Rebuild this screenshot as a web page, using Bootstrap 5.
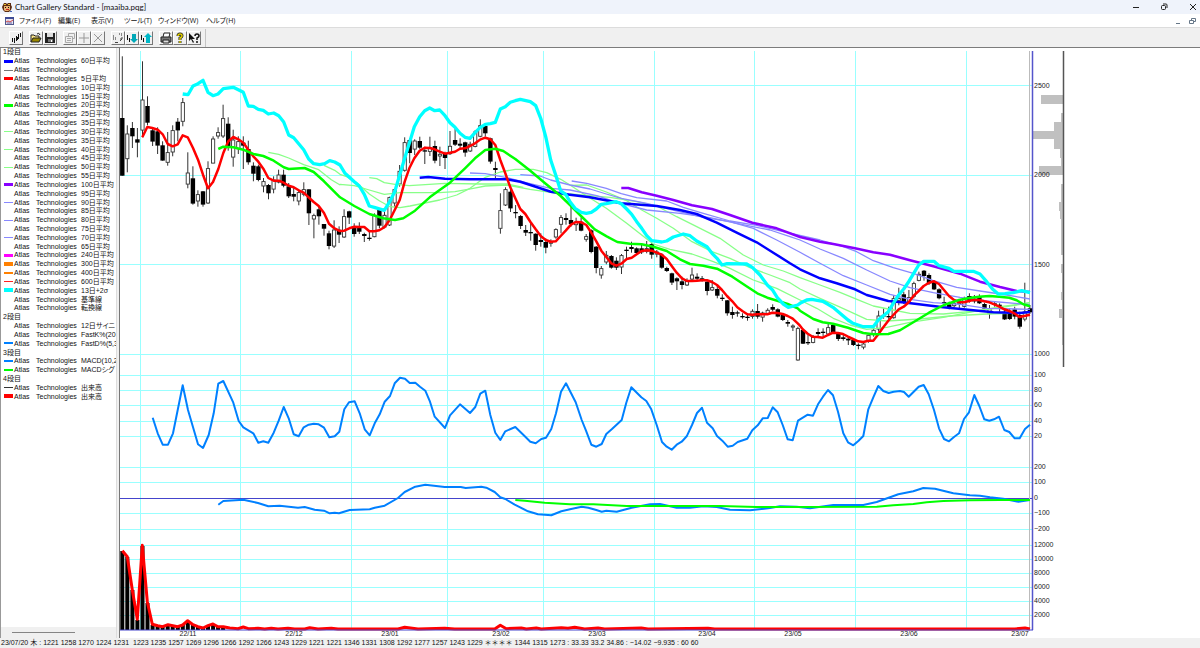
<!DOCTYPE html>
<html lang="ja">
<head>
<meta charset="utf-8">
<meta name="viewport" content="width=device-width, initial-scale=1">
<title>Chart Gallery Standard - [maaiba.pqg]</title>
<link href="https://cdn.jsdelivr.net/npm/bootstrap@5.3.0/dist/css/bootstrap.min.css" rel="stylesheet">
<style>
  body { font-family: "Liberation Sans", "Noto Sans CJK JP", sans-serif; font-size: 7px; line-height: 10px; color: #111; background: #fff; overflow-x: hidden; }
  button { border: 0; padding: 0; background: none; color: inherit; font: inherit; line-height: inherit; }
  svg { display: block; }
  .title-bar { height: 14px; background: #eff3fb; }
  .title-bar h1 { font: 8px/14px Lato, sans-serif; color: #111; }
  .app-icon { margin: 0 3px 0 2px; }
  .doc-icon { margin: 0 5px; }
  .win-controls { gap: 20px; padding-right: 3px; }
  .menu-bar { height: 13px; font: 7px/13px "Open Sans", "Noto Sans CJK JP", sans-serif; }
  .menu-items { display: grid; grid-template-columns: 39px 33px 33px 34px 48px 40px; font-feature-settings: "palt"; }
  .menu-items button { text-align: left; white-space: nowrap; }
  .tool-bar { height: 21px; background: #f0f0f0; border-top: 1px solid #dcdcdc; border-bottom: 1px solid #7c7c7c; padding-left: 9px; gap: 6px; }
  .tool { width: 14px; height: 14px; background: #f0f0f0; border-right: 1px solid #777; border-bottom: 1px solid #777; border-left: 1px solid #fff; border-top: 1px solid #fff; display: flex; align-items: center; justify-content: center; }
  .tool-end { width: 1px; height: 18px; background: #c4c4c4; margin-left: -2px; }
  .side { width: 117px; border-right: 1px solid #ddd; border-left: 1px solid #999; overflow: hidden; }
  .legend { height: 353px; font-feature-settings: "palt"; }
  .legend li { display: flex; align-items: center; flex: 1 1 0; min-height: 0; white-space: nowrap; }
  .legend .head { padding-left: 2px; }
  .swatch { width: 11px; margin: 0 0 0 2px; flex: none; }
  .c1 { width: 22px; flex: none; }
  .c2 { width: 45px; flex: none; }
  .h-scroll { height: 11px; background: #f0f0f0; padding: 5px 41px 0 11px; }
  .h-scroll div { height: 1px; background: #858585; }
  .splitter { width: 3px; background: #f0f0f0; border-right: 1px solid #777; }
  .chart { min-width: 0; }
  .chart svg { width: 100%; height: auto; }
  .chart text { font-size: 7px; fill: #222; }
  .status { height: 10px; background: #f0f0f0; gap: 2px; padding-left: 1px; white-space: nowrap; }
</style>
</head>
<body>
<div class="d-flex flex-column min-vh-100">
  <header>
    <div class="title-bar d-flex align-items-center">
      <svg class="app-icon" width="10" height="11" viewBox="0 0 10 11"><path d="M1 3 2 1h2l1 1 1-1h3v2l1 2-1 3-2 2H3L1 8 0 5z" fill="#5b2c12"/><path d="M2 4h6v4L6 9H3L2 8z" fill="#e8b070"/><path d="M2 2h2v1H2zM6 2h2v1H6z" fill="#e5bd35"/><path d="M3 5h1v1H3zM6 5h1v1H6z" fill="#111"/><path d="M4 7h3v1H4z" fill="#c22"/><path d="M8 9h2v1H8z" fill="#46b"/></svg>
      <h1 class="m-0">Chart Gallery Standard - [maaiba.pqg]</h1>
      <div class="win-controls d-flex align-items-center ms-auto">
        <button aria-label="Minimize"><svg width="8" height="8" viewBox="0 0 8 8"><path d="M1 4.5h6" stroke="#222"/></svg></button>
        <button aria-label="Restore"><svg width="8" height="8" viewBox="0 0 8 8" fill="none" stroke="#222"><rect x="1.5" y="2.5" width="4" height="4" rx="1"/><path d="M3 1h3q1 0 1 1v3"/></svg></button>
        <button aria-label="Close"><svg width="9" height="8" viewBox="0 0 9 8"><path d="m2 1 6 6m0-6L2 7" stroke="#222"/></svg></button>
      </div>
    </div>
    <nav class="menu-bar d-flex align-items-center">
      <svg class="doc-icon flex-shrink-0" width="9" height="8" viewBox="0 0 9 8"><rect x=".5" y=".5" width="8" height="7" fill="#e8e4f0" stroke="#535a8e"/><path d="M0 1h9" stroke="#3d4b96" stroke-width="2"/><path d="m1 5 2-1 2 1 3-2" fill="none" stroke="#c44"/><path d="M2 6h5" stroke="#66a"/></svg>
      <div class="menu-items">
        <button>ファイル(F)</button><button>編集(E)</button><button>表示(V)</button><button>ツール(T)</button><button>ウィンドウ(W)</button><button>ヘルプ(H)</button>
      </div>
      <div class="d-flex gap-2 ms-auto pe-1">
        <button aria-label="Minimize chart"><svg width="6" height="8" viewBox="0 0 6 8"><path d="M1 6.5h4" stroke="#678"/></svg></button>
        <button aria-label="Restore chart"><svg width="7" height="8" viewBox="0 0 7 8" fill="#fff" stroke="#678"><path d="M2.5 1.5h4v3h-4z"/><path d="M.5 3.5h4v3h-4z"/></svg></button>
      </div>
    </nav>
    <div class="tool-bar d-flex align-items-center" id="tools"></div>
  </header>
  <main class="d-flex flex-grow-1">
    <aside class="side d-flex flex-column flex-shrink-0">
      <ul class="legend list-unstyled d-flex flex-column m-0" id="legend"></ul>
      <div class="h-scroll mt-auto"><div></div></div>
    </aside>
    <div class="splitter flex-shrink-0"></div>
    <section class="chart flex-grow-1"><svg id="chart" viewBox="120 48 1080 590" role="img" aria-label="Stock chart"></svg></section>
  </main>
  <footer class="status d-flex align-items-center" id="status"></footer>
</div>
<script src="https://cdn.jsdelivr.net/npm/bootstrap@5.3.0/dist/js/bootstrap.bundle.min.js"></script>
<script>
// Toolbar buttons, in groups
const icons = {
  'Chart': '<path d="M2.500 6v4M4.500 8v3M4.500 8V6M6.500 4v5M8.500 2v5M10.500 1v4" stroke="#111"/><path d="M2 8h1v2H2zM6 5h2v3H6z" fill="#111"/>',
  'Open': '<path d="M1 10V3h3l1 1h4v2" fill="#ffe98c" stroke="#222"/><path d="m1 10 2-4h8L9 10z" fill="#998700" stroke="#222"/><path d="M7 2q2-2 3 1" fill="none" stroke="#222"/>',
  'Save': '<path d="M1 1h10v10H1z" fill="#222"/><path d="M3 1h6v4H3z" fill="#ddd"/><path d="M4 7h5v3H4z" fill="#777"/><path d="M7 8h1v2H7z" fill="#fff"/>',
  'Properties': '<path d="M1.500 4.500h7v6h-7zM4.500 4V1.500h6v5H9M3 6.500h4M3 8.500h4" fill="none" stroke="#aaa"/>',
  'Add': '<path d="M6 1v10M1 6h10" stroke="#999"/>',
  'Delete': '<path d="m2 2 8 8m0-8-8 8" stroke="#999"/>',
  'Refresh': '<path d="M1.500 3v5M3.500 5v3M7.500 1v2M9.500 1v3" stroke="#888"/><path d="M3 10.500h3M8 9l2-2M10 5v2H8" fill="none" stroke="#444"/>',
  'Down': '<path d="M1.500 3v5M3.500 6v4" stroke="#111"/><path d="M6 2h4v5h2l-4 4-4-4h2z" fill="#00a8b8"/>',
  'Up': '<path d="M1.500 3v5M3.500 6v4" stroke="#111"/><path d="M6 11h4V5h2L8 1 4 5h2z" fill="#00b8c8"/>',
  'Print': '<path d="m3 5 1-4h6L9 5" fill="#fff" stroke="#222"/><path d="M1 5h10v5H1z" fill="#777" stroke="#222"/><path d="M3 8h6v3H3z" fill="#ddd" stroke="#222"/>',
  'Help': '<path d="M4 4q0-2 2-2t2 2q0 1-2 2v2M6 9v2" fill="none" stroke="#222" stroke-width="3"/><path d="M4 4q0-2 2-2t2 2q0 1-2 2v2M6 9v2" fill="none" stroke="#e0cf00" stroke-width="1.5"/>',
  'Context help': '<path d="M1 1v8l2-2 2 4 1-1-2-3h3z" fill="#111"/><path d="M7 4q0-2 2-2t2 2q0 1-2 2v2M9 9v2" fill="none" stroke="#111" stroke-width="1.5"/>'
};
document.getElementById('tools').innerHTML =
  [['Chart'],['Open','Save'],['Properties','Add','Delete'],['Refresh','Down','Up'],['Print','Help','Context help']]
  .map(g => '<div class="d-flex">' + g.map(n => `<button class="tool" aria-label="${n}"><svg width="12" height="12" viewBox="0 0 12 12">${icons[n]}</svg></button>`).join('') + '</div>').join('') + '<div class="tool-end"></div>';

// Legend rows: a plain string is a heading, otherwise [label, colour, line width]
const rows = ['1段目',['60日平均','#00f',3],['','#777',1],['5日平均','#f00',3],['10日平均'],['15日平均'],['20日平均','#0f0',3],['25日平均'],['35日平均'],['30日平均','#8f8',1],['35日平均'],['40日平均','#8f8',1],['45日平均'],['50日平均','#8f8',1],['55日平均'],['100日平均','#80f',3],['95日平均'],['90日平均','#88f',1],['85日平均'],['80日平均','#88f',1],['75日平均'],['70日平均','#88f',1],['65日平均'],['240日平均','#f0f',3],['300日平均','#ff8000',4],['400日平均','#ff8000',2],['600日平均','#f22',1],['13日+2σ','#0ff',4],['基準線'],['転換線'],'2段目',['12日サイニ'],['FastK%(20'],['FastD%(5,3','#0080ff',2],'3段目',['MACD(10,2','#0080ff',2],['MACDシグ','#0f0',2],'4段目',['出来高','#333',1],['出来高','#f00',4]];
document.getElementById('legend').innerHTML = rows.map(r => typeof r === 'string' ? `<li class="head">${r}</li>` :
  `<li><span class="swatch">${r[1] ? `<svg width="11" height="5" viewBox="0 0 11 5"><path d="M1 ${r[2] % 2 ? 2.5 : 2}h9" stroke="${r[1]}" stroke-width="${r[2]}"/></svg>` : ''}</span><span class="c1">Atlas</span><span class="c2">Technologies</span><span>${r[0]}</span></li>`).join('');

document.getElementById('status').innerHTML = '23/07/20|木 :|1221|1258|1270|1224|1231||1223|1235|1257|1269|1296|1266|1292|1266|1243|1229|1221|1221|1346|1331|1308|1292|1277|1257|1243|1229|＊＊＊＊|1344|1315|1273 :|33.33|33.2|34.86 :|−14.02|−9.935 :|60|60'
  .split('|').map(t => `<span>${t}</span>`).join('');

// Candles: blocks of [high, body top, body bottom, low, filled] in thirds of a unit below "base"
const blocks = [
 {from:0, base:48, d:[[25,210,383,383,1],[232,257,333,373,0],[222,240,265,300,1],[240,274,284,328,1],[40,155,247,268,0],[145,174,224,232,1],[238,247,281,294,1],[238,250,293,318,1],[280,292,338,338,1],[252,313,344,353,0],[232,247,313,325,0],[210,221,247,280,1],[150,163,221,235,0],[313,374,409,421,0],[355,391,467,470,1],[427,439,460,476,0],[429,430,470,476,1],[340,361,466,468,0],[265,272,346,346,0],[238,253,265,272,0],[170,211,265,270,0],[208,227,300,308,1],[245,275,328,356,0],[265,280,303,318,0],[265,284,293,363,1],[278,303,343,350,1],[343,353,377,400,1],[350,355,396,400,1],[390,400,415,433,0],[408,411,436,454,1],[385,395,424,436,0],[365,380,403,406,0],[365,380,413,418,1],[405,415,445,450,1],[420,438,446,460,1],[425,433,460,472,0],[403,424,440,445,0],[424,424,496,531,1],[497,502,514,571,0],[475,484,505,530,1],[528,528,542,563,1],[548,556,594,604,1],[517,545,595,600,0],[535,545,560,585,1]]},
 {from:44, base:80, d:[[388,409,472,474,0],[392,394,413,432,1],[430,440,462,470,1],[427,440,455,462,1],[458,462,468,486,1],[450,473,477,482,1],[400,405,471,472,0],[384,387,437,445,1],[395,405,442,445,0],[350,352,436,438,0],[325,328,370,380,0],[255,273,313,320,0],[172,187,272,275,0],[175,180,219,250,1],[178,182,208,225,0],[170,183,203,208,1],[200,211,215,252,1],[170,203,215,228,0],[182,198,242,250,1],[200,222,229,258,0],[215,222,234,267,1],[153,198,222,225,0],[145,180,194,198,1],[175,191,197,205,1],[185,187,218,230,1],[185,192,214,216,0],[150,155,200,202,0],[118,136,170,172,0],[130,138,160,170,1],[173,175,245,251,1],[245,264,270,297,1],[340,391,446,461,0],[322,328,376,378,0],[320,335,385,396,1],[375,396,400,415,1],[405,408,438,447,1],[435,450,458,468,1],[428,456,460,482,1],[460,461,495,512,1],[460,480,486,500,1],[475,486,503,520,1],[478,484,491,500,0],[445,448,472,476,0],[405,412,434,460,0],[400,414,420,434,1]]},
 {from:89, base:170, d:[[110,150,162,170,1],[143,155,165,183,0],[142,155,182,184,1],[192,199,209,215,0],[178,181,246,250,1],[228,230,294,310,1],[288,295,316,326,0],[243,255,277,283,0],[255,258,293,296,1],[262,272,293,300,1],[252,256,292,312,0],[230,239,243,265,1],[215,231,237,248,1],[232,235,249,255,1],[225,235,247,252,1],[213,235,245,250,0],[218,222,254,266,1],[240,245,253,262,0],[250,254,293,296,1],[290,294,303,306,1],[308,310,338,345,1],[322,325,334,360,1],[320,334,345,358,1],[325,333,346,348,0],[293,314,328,332,0],[310,320,326,332,1],[318,325,330,335,1],[330,335,363,376,1],[330,352,361,363,0],[348,357,377,385,1],[373,383,386,393,1],[390,391,430,437,1],[410,426,435,446,1],[422,427,431,440,1],[430,438,440,446,1],[430,440,444,452,1],[418,423,440,446,0],[402,423,440,446,1],[425,428,442,455,0],[415,420,432,435,0],[403,411,419,424,1],[415,418,440,442,1],[430,434,450,453,1],[450,456,461,470,1],[463,467,472,483,0],[470,475,571,572,0]]},
 {from:135, base:240, d:[[270,270,311,312,1],[285,306,310,315,1],[285,291,308,310,0],[265,276,282,292,1],[265,275,279,290,1],[252,262,283,285,0],[250,255,276,280,1],[278,281,297,303,1],[282,292,297,302,1],[290,296,301,315,1],[298,300,315,318,1],[310,314,318,328,1],[308,311,322,328,0],[285,285,304,308,0],[262,270,283,290,0],[212,227,268,275,0],[205,225,230,236,0],[200,228,232,238,1],[165,175,234,236,0],[143,175,182,196,0],[155,163,187,192,1],[150,172,185,190,0],[125,130,170,175,0],[95,102,122,124,0],[90,92,108,122,1],[100,105,130,135,1],[120,125,148,150,1],[145,148,175,178,1],[170,186,190,198,1],[185,193,202,208,1],[180,190,198,202,0],[180,185,192,208,0],[170,176,200,203,0],[160,168,180,188,1],[165,176,184,190,1],[163,168,190,192,1],[188,192,206,215,1],[195,205,222,236,0],[185,190,195,200,1],[190,194,200,215,1],[205,215,238,240,1],[205,215,237,240,1],[200,208,230,238,1],[215,225,260,266,1],[128,215,238,244,0],[195,205,217,222,1]]}
];
// Origins of the chart regions that the line points are counted from
const O = {A:[118,48],B:[340,80],C:[570,170],D:[800,240],E:[118,370],F:[570,370],G:[118,530]};
// Lines: colour, width, then one list of points (in thirds) for each region crossed
const lines = [
 ['#8f8',1.3,{A:'451,313 482,319 512,330 557,350 602,365 640,395 665,410',B:'0,313 43,317 88,330 133,343 180,338 299,338 345,335 400,325 436,318 500,315 570,328 632,337 680,346'}],
 ['#8f8',1.3,{A:'618,352 650,367',B:'0,283 20,290 50,308 88,342 118,362 150,380 180,383 210,378 299,360 350,345 390,325 436,292 481,276 526,268 580,268 620,278 662,298',C:'0,45 50,78 109,115 170,160 215,195 250,222 300,238 366,252 430,275 480,295 550,330 620,355',D:'0,180 50,205 100,235 150,255 200,268 260,262 330,247 430,232 520,215 600,200 690,188'}],
 ['#8f8',1.3,{B:'88,293 110,296 133,308 165,313 208,317 315,310 420,312 500,312 550,322'}],
 ['#8f8',1.3,{C:'0,46 50,45 109,66 170,92 215,120 260,145 310,175 366,215 426,245 480,265 540,293 600,315 660,338',D:'0,147 60,175 110,197 150,215 200,238 260,243 360,237 450,228 560,222 690,218'}],
 ['#8f8',1.3,{C:'0,72 120,82 200,95 260,108 320,140 380,170 450,205 520,255 580,285 640,303',D:'0,113 60,135 120,157 180,182 220,198 280,210 330,220 430,222 540,212 620,200 690,188'}],
 ['#88f',1.3,{B:'541,284 600,288 632,300',C:'0,45 60,57 109,72 154,85 230,100 300,118 400,142 480,155 550,175 620,210',D:'0,37 60,70 130,107 200,135 270,163 330,178 400,188 480,193 560,205 690,208'}],
 ['#88f',1.3,{B:'390,279 436,281 500,293 570,311 632,325',C:'0,60 80,77 150,100 230,120 330,130 420,143 500,160 600,180 660,200',D:'0,0 60,27 130,55 200,90 270,123 330,143 400,158 480,172 560,183 690,194'}],
 ['#88f',1.3,{C:'5,33 50,40 109,55 154,71 200,83 290,93 340,112 400,130 480,153 560,166 640,185',D:'60,0 130,20 170,35 220,62 280,83 340,100 400,122 470,142 540,153 620,165 690,177'}],
 ['#00f',2.5,{B:'239,293 265,291 315,296 390,298 500,298 541,305 587,320 632,335 662,340',C:'0,74 60,82 154,100 260,108 330,120 380,132 440,158 500,188 560,217 610,248 660,280',D:'0,88 60,115 110,130 165,148 200,165 265,183 320,188 430,202 520,211 580,217 660,219 690,216'}],
 ['#80f',2.5,{C:'154,54 175,54 215,67 260,77 310,90 366,106 426,117 480,135 547,158 620,175',D:'0,-9 60,5 100,12 165,25 220,37 270,44 330,61 400,79 480,101 540,125 600,141 650,153 690,156'}],
 ['#f00',2.5,{A:'73,268 88,237 103,240 119,245 134,259 149,288 164,295 179,289 194,262 209,268 225,300 240,335 255,380 270,421 285,402 301,363 316,315 331,280 346,267 361,274 376,284 391,305 406,325 421,341 436,362 451,390 467,398 482,398 497,404 512,413 527,418 542,427 557,434 572,448 587,462 602,474 618,495 633,527 648,540 663,548',B:'0,453 13,452 28,445 43,440 58,441 73,441 88,454 103,454 118,451 133,442 149,420 164,390 179,360 194,305 208,265 223,235 239,212 254,203 269,204 284,208 299,215 315,221 330,218 345,215 360,206 375,205 390,198 405,190 420,179 436,173 451,178 466,195 481,240 496,280 511,322 526,355 541,387 556,402 571,425 587,448 602,468 617,480 632,485 647,484 662,468 677,452',C:'3,164 18,156 34,157 49,165 64,188 79,214 94,242 109,261 124,280 139,287 154,281 170,267 185,263 200,253 215,243 230,241 245,242 260,248 275,254 290,267 305,288 320,308 336,325 351,333 366,333 381,332 396,331 411,331 426,336 441,345 456,360 471,378 487,394 502,412 517,423 532,433 547,434 562,433 577,433 592,433 607,428 622,429 638,432 653,438 668,446 683,460',D:'0,257 8,268 23,281 38,290 53,291 68,293 84,285 99,278 114,279 129,282 144,290 159,297 174,304 190,306 205,302 220,302 235,283 250,262 265,242 280,225 296,208 311,200 326,187 341,167 356,153 371,138 387,128 402,124 417,132 432,150 447,168 462,180 477,186 492,187 507,183 522,179 537,180 553,184 568,187 583,193 598,200 613,208 628,213 643,220 658,231 673,228 690,224'}],
 ['#0f0',2.5,{A:'301,303 316,296 346,298 376,305 406,318 436,324 467,338 497,358 512,363 560,360 587,372 618,400 648,430',B:'0,352 43,378 88,402 130,415 165,420 190,415 225,392 269,352 299,330 330,308 375,265 405,235 436,210 466,206 490,213 526,237 571,272 617,311 662,348',C:'0,105 30,135 74,178 110,199 142,216 180,221 215,223 250,230 290,243 330,268 360,282 400,287 441,296 487,320 532,350 562,370 592,383 622,392 653,402 683,415',D:'0,212 40,237 68,247 99,251 144,263 190,279 220,283 265,282 300,271 341,246 387,218 432,195 477,180 507,174 537,170 568,168 598,170 628,173 650,181 670,193 690,199'}],
 ['#0ff',3.3,{A:'194,138 210,140 225,114 240,107 255,97 270,133 285,143 300,138 316,122 346,118 376,133 391,174 406,175 421,184 436,187 451,198 467,195 482,203 497,222 512,261 527,269 557,305 572,333 587,347 605,350 620,347 635,338 650,342',B:'0,255 15,280 43,305 58,318 73,343 88,378 103,382 133,391 149,365 164,335 179,285 194,235 208,190 223,140 239,110 254,92 269,84 284,92 299,90 315,107 330,128 345,142 360,160 375,172 390,175 405,158 420,143 436,133 451,131 466,127 481,87 496,80 511,67 526,62 541,58 571,65 587,77 602,115 617,170 632,240 647,285 662,333 677,343',C:'0,95 15,115 34,127 49,130 64,127 79,117 94,103 109,101 139,95 154,101 170,117 185,133 200,155 215,175 230,197 245,212 275,216 290,213 310,201 340,192 360,197 380,213 411,230 426,250 441,265 456,285 471,281 530,282 547,292 570,315 592,345 607,359 622,383 640,402 655,412 683,405',D:'0,190 20,180 35,178 68,184 84,193 99,202 120,220 144,240 159,250 190,260 220,260 235,240 265,215 280,190 296,165 311,147 326,125 341,100 356,75 371,64 402,64 417,77 447,85 462,94 520,94 540,102 560,125 578,148 595,162 615,161 640,158 665,152 690,158'}],
 ['#0080ff',2,{E:'104,143 119,190 134,224 150,224 165,190 194,46 210,120 240,223 255,234 272,195 287,130 301,41 316,33 346,98 362,153 376,172 406,190 421,218 436,214 451,218 467,188 482,152 497,111 512,145 527,193 542,199 557,172 572,164 587,161 602,163 618,173 634,202 650,199 664,185 679,118 693,97 710,94 725,130 740,178 755,196 770,160 785,133 800,95 816,78 830,40 846,23 861,26 875,39 892,38 906,50 922,62 936,95 950,140 981,174 996,136 1026,103 1056,129 1072,111 1087,71 1102,62 1117,135 1132,188 1147,210 1162,184 1192,171 1222,200 1237,215 1253,220 1270,207 1284,203 1300,177 1314,130 1329,65 1344,40',F:'17,97 35,150 48,182 64,224 79,230 95,222 109,192 125,178 155,150 169,98 184,52 199,67 214,82 229,93 244,118 260,165 276,216 290,230 305,239 320,224 335,215 350,199 366,165 381,129 396,113 411,158 428,175 441,198 457,212 473,230 488,227 503,216 532,206 547,181 563,166 578,145 593,144 608,112 623,127 638,165 653,208 668,211 684,152 713,134 729,137 744,103 759,80 774,60 789,76 804,125 820,190 834,217 850,226 865,213 880,198 895,118 910,82 925,48 940,63 956,69 971,65 990,63 1002,66 1016,80 1046,50 1061,45 1076,73 1092,120 1107,175 1122,207 1137,214 1152,201 1167,190 1182,147 1197,127 1213,75 1228,108 1243,148 1258,152 1272,148 1287,140 1303,180 1318,186 1334,205 1349,205 1365,177 1380,164'}],
 ['#0080ff',2,{E:'301,404 316,393 376,389 420,399 451,409 485,407 540,413 560,411 590,419 618,422 635,430 650,428 663,430 695,420 755,418 770,413 800,407 840,384 860,366 892,350 922,344 980,351 1028,351 1043,354 1090,350 1105,353 1130,366 1147,382 1162,387 1190,404 1230,424 1260,433 1300,436 1330,424',F:'0,418 35,410 55,413 79,420 95,425 109,422 140,425 185,413 240,403 270,402 320,413 360,413 400,409 440,411 480,419 540,421 600,414 630,409 680,410 720,415 790,405 880,405 920,396 960,382 985,373 1030,364 1060,354 1095,356 1150,370 1200,376 1230,377 1260,382 1300,386 1345,395 1380,390'}],
 ['#0f0',2,{E:'1192,390 1220,392 1280,398 1330,401',F:'0,403 70,403 170,408 450,408 560,411 920,410 970,406 1030,402 1070,397 1120,393 1200,391 1290,390 1380,390'}],
 ['#f00',3,{G:'13,62 28,80 43,180 58,268 73,46 88,215 103,283 119,287 134,290 150,284 179,290 194,285 209,272 225,284 240,290 255,294 270,287 285,282 300,290 316,290 335,294 360,296 376,291 391,296 420,295 440,297 460,295 480,297 510,295 530,297 560,297 575,293 600,297 640,295 660,297 840,297 860,292 900,297 980,295 1010,297 1130,297 1147,286 1165,296 1210,294 1225,297 1255,294 1270,297 1330,293 1350,295 1370,292 1400,297 1440,294 1460,297 1570,294 1590,297 1770,295 1790,297 2690,297 2721,294 2736,297'}]
];
const px = i => 122.3 + i * 5.042, r = n => +n.toFixed(1);
const ln = (x1, y1, x2, y2, c, w = 1) => `<path d="M${x1} ${y1}L${x2} ${y2}" stroke="${c}" stroke-width="${w}"/>`;
const box = (x, y, w, h, f) => `<rect x="${r(x)}" y="${r(y)}" width="${r(w)}" height="${r(h)}" ${f}/>`;
let s = '<rect x="120" y="48" width="1080" height="590" fill="#fff"/>';
// Grid
[140,240,351,447,543,654,754,855,966].forEach(x => s += ln(x + .5, 51, x + .5, 629, '#9ff'));
[85,175,264,354,375,390,405,421,436,467,482,513,529,545,559,573,587,601,615].forEach(y => s += ln(120, y + .5, 1032, y + .5, '#9ff'));
s += ln(120, 498.5, 1032, 498.5, '#44c');
// Price distribution at the right
[[95,9,22],[113,9,2],[122,9,9],[131,8,30],[139,10,9],[149,9,3],[158,8,2],[166,9,24],[184,18,2],[202,9,4],[211,8,3],[219,36,2],[264,9,2],[273,19,1],[292,8,2],[300,9,1],[309,9,4],[318,27,1]].forEach(b => s += box(1063 - b[2], b[0], b[2], b[1], 'fill="#c0c0c0"'));
s += ln(1063.5, 51, 1063.5, 367, '#555', 1.5) + ln(1029.5, 51, 1029.5, 629, '#bbb') + ln(1032.5, 51, 1032.5, 630, '#55c', 1.5);
// Candles and volume bars
blocks.forEach(b => b.d.forEach((c, k) => {
  const x = px(b.from + k), y = c.map(v => b.base + v / 3);
  s += ln(r(x), r(y[0]), r(x), r(y[3]), '#333') + (c[4] ? box(x - 2.2, y[1], 4.4, Math.max(1.3, y[2] - y[1]), 'fill="#000"') : box(x - 1.6, y[1] + .3, 3.2, Math.max(1, y[2] - y[1] - .6), 'fill="#fff" stroke="#333" stroke-width=".9"'));
}));
[551,557,590,620,546,603,625,626,627,625,626,627,625,621,625,627,628,626,624,627,627].forEach((y, i) => s += box(px(i) - 2, y, 4, 630 - y, 'fill="#000"'));
// Lines
lines.forEach(l => {
  const pts = Object.entries(l[2]).flatMap(([k, p]) => p.split(' ').map(q => { const [a, b] = q.split(','); return r(O[k][0] + a / 3) + ',' + r(O[k][1] + b / 3); }));
  s += `<polyline points="${pts.join(' ')}" fill="none" stroke="${l[0]}" stroke-width="${l[1]}" stroke-linejoin="round"/>`;
});
s += ln(120, 630, 1033, 630, '#44c');
// Axis labels
[[86,2500],[175,2000],[265,1500],[354,1000],[375,100],[390,80],[405,60],[421,40],[436,20],[467,200],[482,100],[498,0],[513,'−100'],[529,'−200'],[545,12000],[559,10000],[573,8000],[587,6000],[601,4000],[615,2000]].forEach(t => s += `<text x="1034" y="${t[0] + 2}">${t[1]}</text>`);
[[188,'22/11'],[294,'22/12'],[390,'23/01'],[501,'23/02'],[597,'23/03'],[707,'23/04'],[793,'23/05'],[909,'23/06'],[1020,'23/07']].forEach(t => s += `<text x="${t[0]}" y="636" text-anchor="middle">${t[1]}</text>`);
document.getElementById('chart').innerHTML = s;
</script>
</body>
</html>
